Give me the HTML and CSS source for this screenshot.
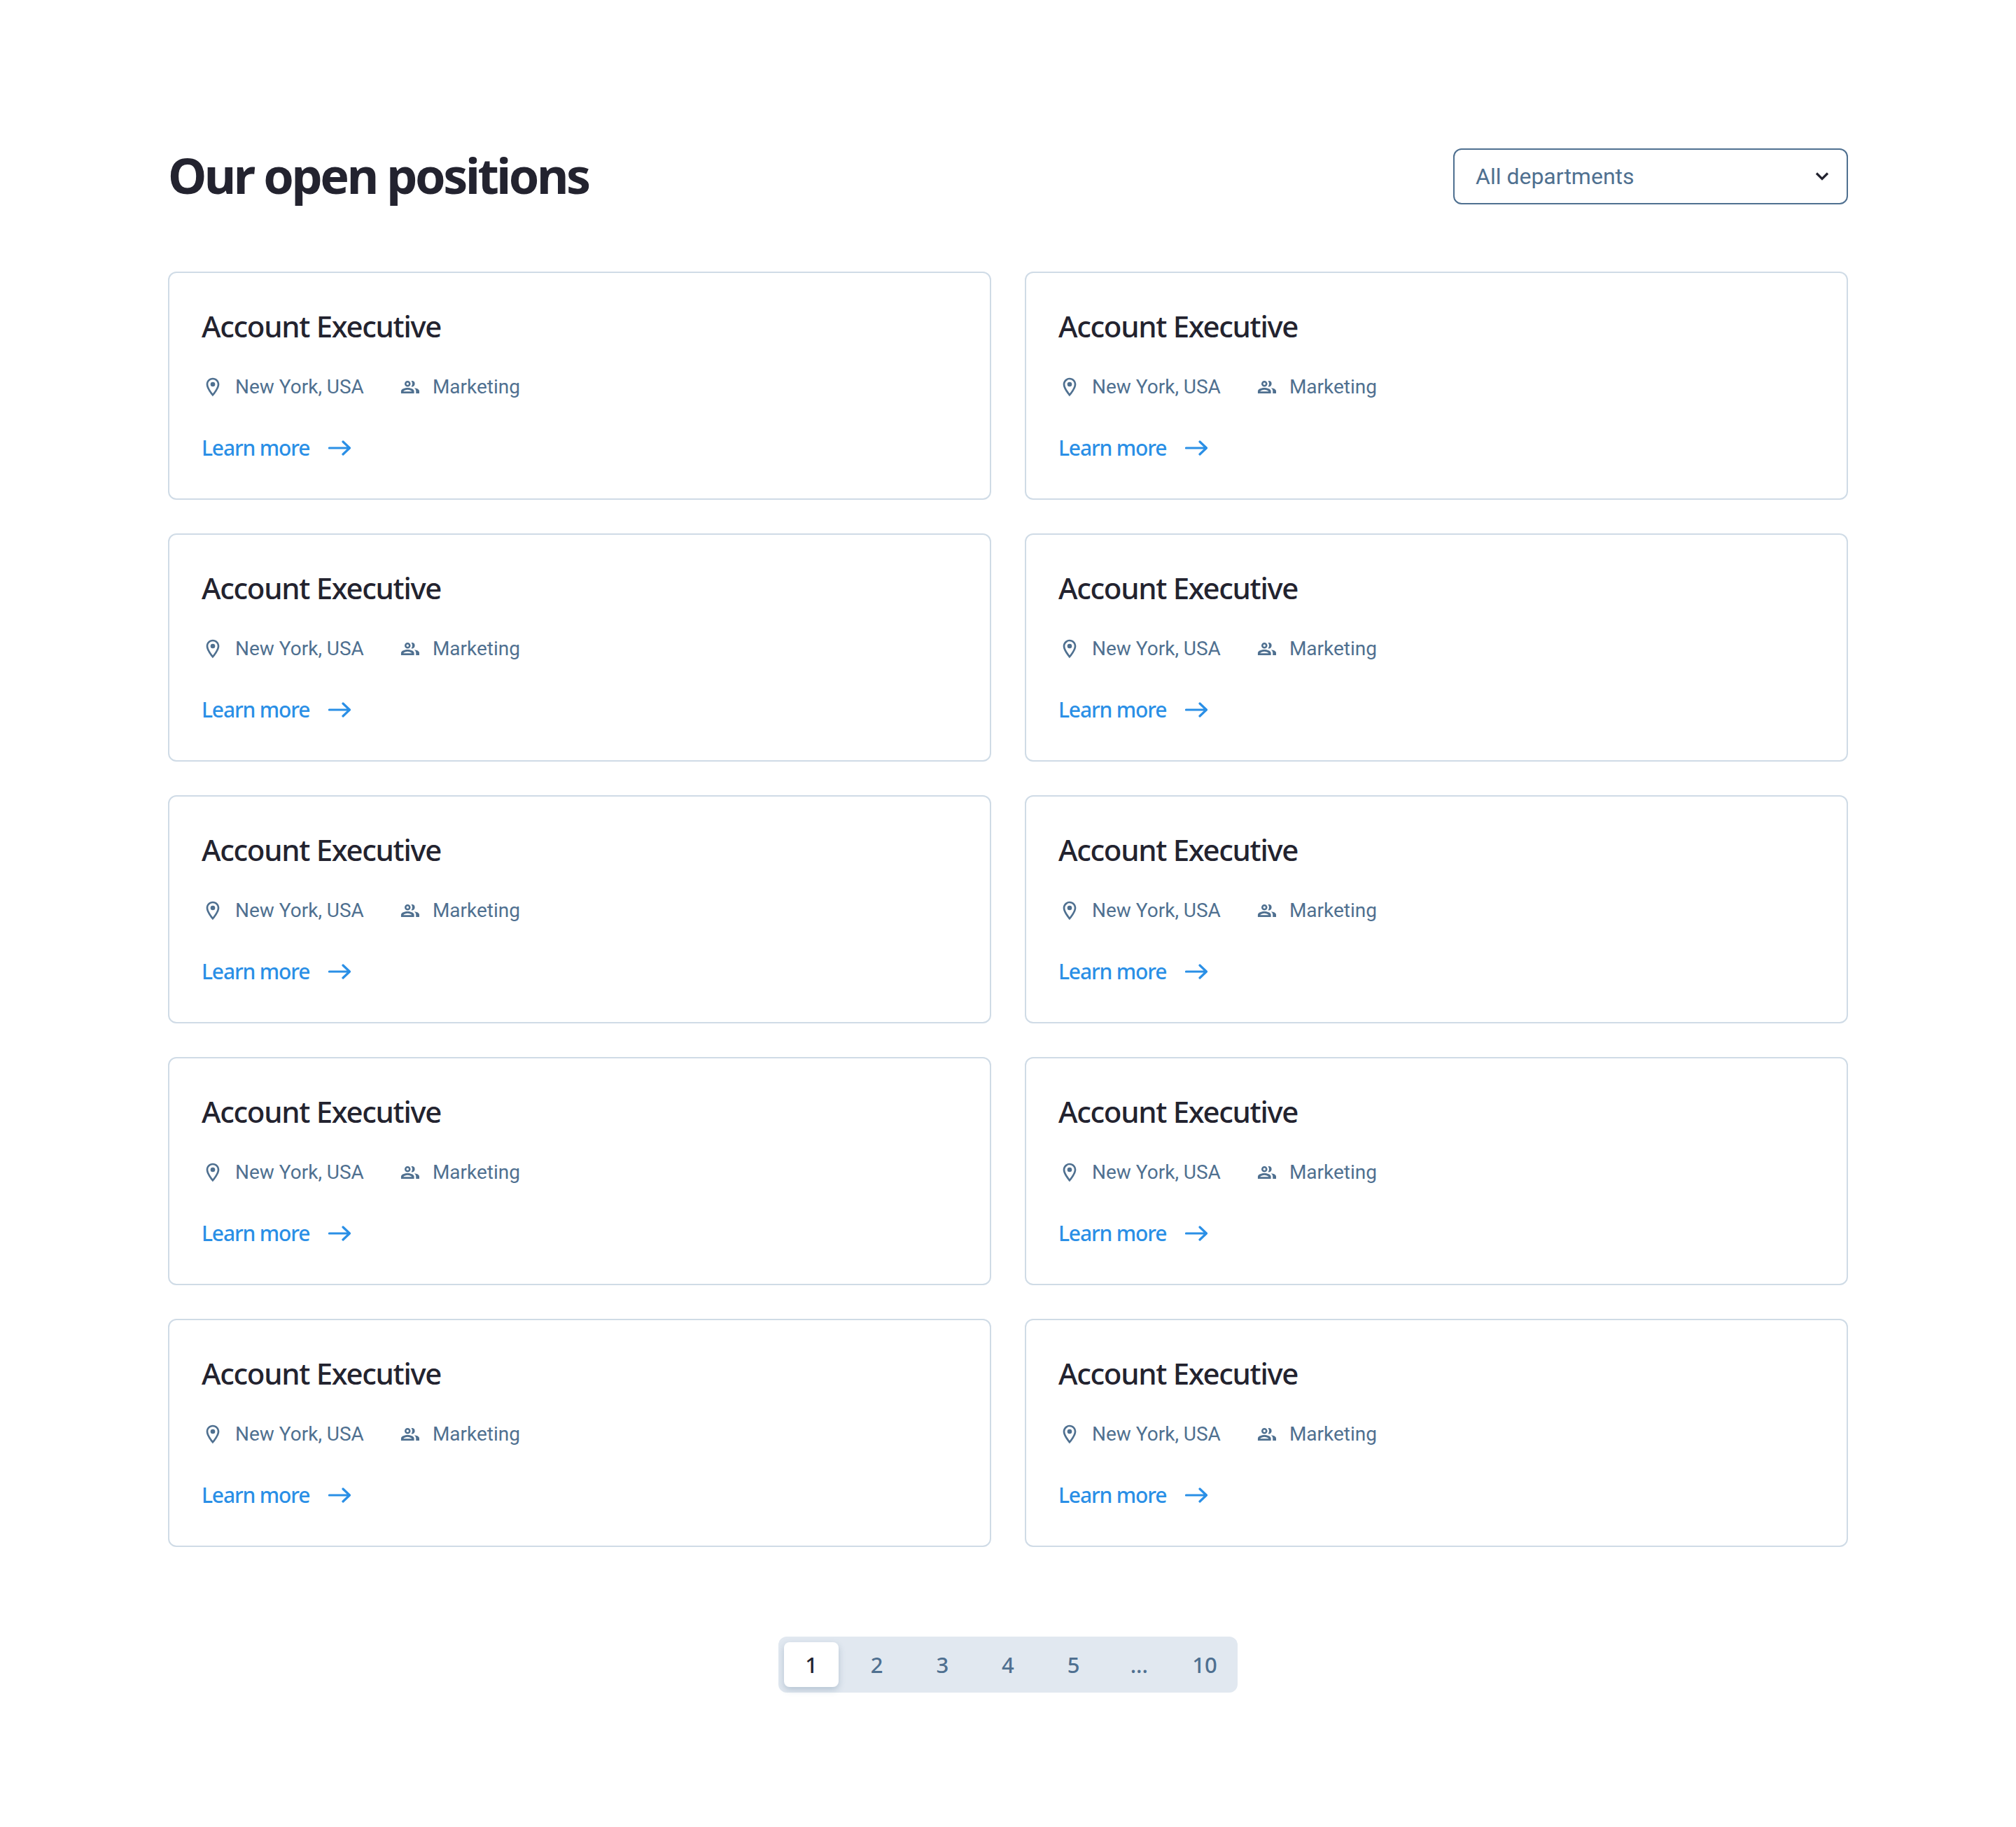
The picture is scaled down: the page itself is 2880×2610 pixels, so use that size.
FILE: index.html

```html
<!DOCTYPE html>
<html lang="en">

<head>
    <meta charset="UTF-8">
    <title>Our open positions</title>
    <link rel="stylesheet" href="styles.css">
</head>

<body>
    <svg class="defs" width="0" height="0">
        <symbol id="i-pin" viewBox="0 0 24 24">
            <path d="M12 2C8.130 2 5 5.130 5 9c0 5.250 7 13 7 13s7-7.750 7-13c0-3.870-3.130-7-7-7zM7 9c0-2.760 2.240-5 5-5s5 2.240 5 5c0 2.880-2.880 7.190-5 9.880C9.920 16.210 7 11.850 7 9z"/>
            <circle cx="12" cy="9" r="2.500"/>
        </symbol>
        <symbol id="i-people" viewBox="0 0 24 24">
            <path d="M9.200 5.250a3.200 3.200 0 1 0 0 6.400 3.200 3.200 0 0 0 0-6.400zm0 1.900a1.300 1.300 0 1 1 0 2.600 1.300 1.300 0 0 1 0-2.600z"/>
            <path d="M14.300 5.250c-.4 0-.8.100-1.100.2a5 5 0 0 1 0 5.900c.3.100.7.200 1.100.2a3.200 3.200 0 0 0 0-6.300z"/>
            <path d="M9.200 12.800c-2.800 0-7 1.100-7 3.600v2.350h14v-2.350c0-2.500-4.200-3.600-7-3.600zm-4.600 3.900c.7-1 3-1.800 4.600-1.800s3.900.8 4.600 1.800z"/>
            <path d="M16.300 13c1.200.9 1.900 2 1.900 3.400v2.350h3.550v-2.350c0-2.100-2.900-3.100-5.450-3.400z"/>
        </symbol>
        <symbol id="i-arrow" viewBox="0 0 32 24">
            <path d="M1.500 12h28.500M21 3l9.500 9L21 21" fill="none" stroke="currentColor" stroke-width="3.200" stroke-linecap="round" stroke-linejoin="round"/>
        </symbol>
    </svg>

    <div class="page">
        <div class="top">
            <h1 class="title">Our open positions</h1>
            <div class="select">
                <span>All departments</span>
                <svg class="chevron" viewBox="0 0 20 14"><path d="M2 2.500l8 8 8-8" fill="none" stroke="currentColor" stroke-width="3.200"/></svg>
            </div>
        </div>

        <div class="jobs" id="jobs">
            <div class="job">
                <h2 class="job_name">Account Executive</h2>
                <div class="meta">
                    <div class="meta_item"><svg class="icon"><use href="#i-pin"/></svg>New York, USA</div>
                    <div class="meta_item"><svg class="icon"><use href="#i-people"/></svg>Marketing</div>
                </div>
                <a class="more" href="#">Learn more<svg class="arrow"><use href="#i-arrow"/></svg></a>
            </div>
            <div class="job">
                <h2 class="job_name">Account Executive</h2>
                <div class="meta">
                    <div class="meta_item"><svg class="icon"><use href="#i-pin"/></svg>New York, USA</div>
                    <div class="meta_item"><svg class="icon"><use href="#i-people"/></svg>Marketing</div>
                </div>
                <a class="more" href="#">Learn more<svg class="arrow"><use href="#i-arrow"/></svg></a>
            </div>
            <div class="job">
                <h2 class="job_name">Account Executive</h2>
                <div class="meta">
                    <div class="meta_item"><svg class="icon"><use href="#i-pin"/></svg>New York, USA</div>
                    <div class="meta_item"><svg class="icon"><use href="#i-people"/></svg>Marketing</div>
                </div>
                <a class="more" href="#">Learn more<svg class="arrow"><use href="#i-arrow"/></svg></a>
            </div>
            <div class="job">
                <h2 class="job_name">Account Executive</h2>
                <div class="meta">
                    <div class="meta_item"><svg class="icon"><use href="#i-pin"/></svg>New York, USA</div>
                    <div class="meta_item"><svg class="icon"><use href="#i-people"/></svg>Marketing</div>
                </div>
                <a class="more" href="#">Learn more<svg class="arrow"><use href="#i-arrow"/></svg></a>
            </div>
            <div class="job">
                <h2 class="job_name">Account Executive</h2>
                <div class="meta">
                    <div class="meta_item"><svg class="icon"><use href="#i-pin"/></svg>New York, USA</div>
                    <div class="meta_item"><svg class="icon"><use href="#i-people"/></svg>Marketing</div>
                </div>
                <a class="more" href="#">Learn more<svg class="arrow"><use href="#i-arrow"/></svg></a>
            </div>
            <div class="job">
                <h2 class="job_name">Account Executive</h2>
                <div class="meta">
                    <div class="meta_item"><svg class="icon"><use href="#i-pin"/></svg>New York, USA</div>
                    <div class="meta_item"><svg class="icon"><use href="#i-people"/></svg>Marketing</div>
                </div>
                <a class="more" href="#">Learn more<svg class="arrow"><use href="#i-arrow"/></svg></a>
            </div>
            <div class="job">
                <h2 class="job_name">Account Executive</h2>
                <div class="meta">
                    <div class="meta_item"><svg class="icon"><use href="#i-pin"/></svg>New York, USA</div>
                    <div class="meta_item"><svg class="icon"><use href="#i-people"/></svg>Marketing</div>
                </div>
                <a class="more" href="#">Learn more<svg class="arrow"><use href="#i-arrow"/></svg></a>
            </div>
            <div class="job">
                <h2 class="job_name">Account Executive</h2>
                <div class="meta">
                    <div class="meta_item"><svg class="icon"><use href="#i-pin"/></svg>New York, USA</div>
                    <div class="meta_item"><svg class="icon"><use href="#i-people"/></svg>Marketing</div>
                </div>
                <a class="more" href="#">Learn more<svg class="arrow"><use href="#i-arrow"/></svg></a>
            </div>
            <div class="job">
                <h2 class="job_name">Account Executive</h2>
                <div class="meta">
                    <div class="meta_item"><svg class="icon"><use href="#i-pin"/></svg>New York, USA</div>
                    <div class="meta_item"><svg class="icon"><use href="#i-people"/></svg>Marketing</div>
                </div>
                <a class="more" href="#">Learn more<svg class="arrow"><use href="#i-arrow"/></svg></a>
            </div>
            <div class="job">
                <h2 class="job_name">Account Executive</h2>
                <div class="meta">
                    <div class="meta_item"><svg class="icon"><use href="#i-pin"/></svg>New York, USA</div>
                    <div class="meta_item"><svg class="icon"><use href="#i-people"/></svg>Marketing</div>
                </div>
                <a class="more" href="#">Learn more<svg class="arrow"><use href="#i-arrow"/></svg></a>
            </div>
        </div>

        <div class="pager_wrap">
            <div class="pager">
                <a class="page_no current" href="#">1</a>
                <a class="page_no" href="#">2</a>
                <a class="page_no" href="#">3</a>
                <a class="page_no" href="#">4</a>
                <a class="page_no" href="#">5</a>
                <a class="page_no" href="#">...</a>
                <a class="page_no" href="#">10</a>
            </div>
        </div>
    </div>
</body>

</html>
```

FILE: styles.css

```css
* {
    box-sizing: border-box;
}

body {
    margin: 0;
    background: #fff;
    font-family: "Noto Sans", sans-serif;
}

.defs {
    position: absolute;
}

.page {
    width: 2400px;
    margin: 0 auto;
    padding: 212px 0 192px;
}

.top {
    display: flex;
    justify-content: space-between;
    align-items: center;
    margin-bottom: 96px;
}

.title {
    margin: -2px 0 2px;
    font-size: 70px;
    line-height: 80px;
    font-weight: 700;
    letter-spacing: -3.500px;
    color: #23232f;
}

.select {
    width: 564px;
    height: 80px;
    padding: 0 25px 0 30px;
    display: flex;
    justify-content: space-between;
    align-items: center;
    border: 2px solid #4f7090;
    border-radius: 12px;
    font-family: Roboto, sans-serif;
    font-size: 32px;
    color: #4f7090;
}

.chevron {
    width: 20px;
    height: 14px;
    color: #23232f;
}

.jobs {
    display: grid;
    grid-template-columns: 1fr 1fr;
    gap: 48px;
}

.job {
    height: 326px;
    padding: 48px 46px;
    border: 2px solid #cfdbe6;
    border-radius: 12px;
}

.job_name {
    margin: 0;
    font-size: 42px;
    line-height: 56px;
    font-weight: 500;
    letter-spacing: -1.300px;
    color: #23232f;
}

.meta {
    display: flex;
    gap: 50px;
    margin-top: 39px;
}

.meta_item {
    display: flex;
    align-items: center;
    gap: 16px;
    font-family: Roboto, sans-serif;
    font-size: 28px;
    line-height: 40px;
    color: #4f7090;
}

.icon {
    width: 32px;
    height: 32px;
    fill: #4f7090;
}

.more {
    display: inline-flex;
    align-items: center;
    gap: 27px;
    margin-top: 43px;
    font-size: 30px;
    line-height: 48px;
    font-weight: 500;
    letter-spacing: -1.150px;
    color: #2a8fe6;
    text-decoration: none;
}

.arrow {
    width: 32px;
    height: 24px;
}

.pager_wrap {
    display: flex;
    justify-content: center;
    margin-top: 128px;
}

.pager {
    display: flex;
    justify-content: space-between;
    width: 656px;
    padding: 8px;
    background: #e1e8f0;
    border-radius: 12px;
}

.page_no {
    width: 78px;
    height: 64px;
    display: flex;
    justify-content: center;
    align-items: center;
    border-radius: 8px;
    font-size: 31px;
    font-weight: 500;
    color: #4f7090;
    text-decoration: none;
}

.current {
    background: #fff;
    color: #23232f;
    box-shadow: 0 4px 10px rgba(79, 112, 144, 0.3);
}
```
